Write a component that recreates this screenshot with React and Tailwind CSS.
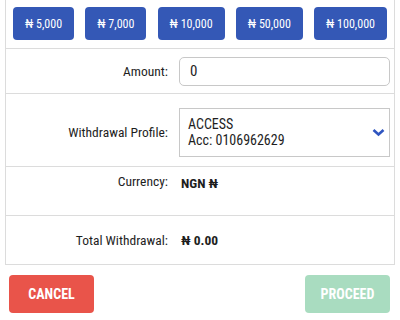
import React from "react";

const amounts = ["5,000", "7,000", "10,000", "50,000", "100,000"];

const Row = ({ label, children, className = "" }) => (
  <div className={`flex border-t border-[#dcdcdc] ${className}`}>
    <div className="w-[162px] shrink-0 text-right text-[13.5px] text-[#1e1e1e]">{label}</div>
    <div className="ml-[11px] mr-[4px] flex-1">{children}</div>
  </div>
);

export default function App() {
  return (
    <div className="w-[400px] h-[320px] bg-white font-['Roboto_Condensed','Roboto',sans-serif] text-[#1e1e1e]">
      <div className="mx-[5px] border-x border-b border-[#dcdcdc]">
        {/* quick amounts */}
        <div className="flex justify-between px-[7px] pt-[7px] pb-[8px]">
          {amounts.map((a) => (
            <button
              key={a}
              className="h-[33px] rounded-[4px] bg-[#3458b6] px-[12px] text-[12px] text-white"
            >
              ₦ {a}
            </button>
          ))}
        </div>

        <Row label="Amount:" className="h-[45px] items-center">
          <div className="flex h-[29px] items-center rounded-[5px] border border-[#c8c8c8] px-[10px] text-[15px]">
            0
          </div>
        </Row>

        <Row label="Withdrawal Profile:" className="h-[73px] items-center pt-[4px]">
          <div className="flex h-[49px] items-center justify-between border border-[#c8c8c8] pl-[8px] pr-[4px]">
            <div className="text-[14px] leading-[16px]">
              <div>ACCESS</div>
              <div>Acc: 0106962629</div>
            </div>
            <svg width="13" height="9" viewBox="0 0 13 9" fill="none">
              <path d="M1.5 2l5 4.5 5-4.5" stroke="#2f55c0" strokeWidth="2.6" />
            </svg>
          </div>
        </Row>

        <Row label="Currency:" className="h-[49px] items-start pt-[4px]">
          <span className="ml-[2px] text-[13.5px] font-bold">NGN ₦</span>
        </Row>

        <Row label="Total Withdrawal:" className="h-[49px] items-center">
          <span className="ml-[2px] text-[13.5px] font-bold">₦ 0.00</span>
        </Row>
      </div>

      <div className="mt-[10px] flex justify-between pl-[9px] pr-[10px]">
        <button className="h-[38px] w-[85px] rounded-[4px] bg-[#e9544a] text-[14px] font-bold text-white">
          CANCEL
        </button>
        <button className="h-[38px] w-[85px] rounded-[4px] bg-[#a9dcc0] text-[14px] font-bold text-white">
          PROCEED
        </button>
      </div>
    </div>
  );
}
